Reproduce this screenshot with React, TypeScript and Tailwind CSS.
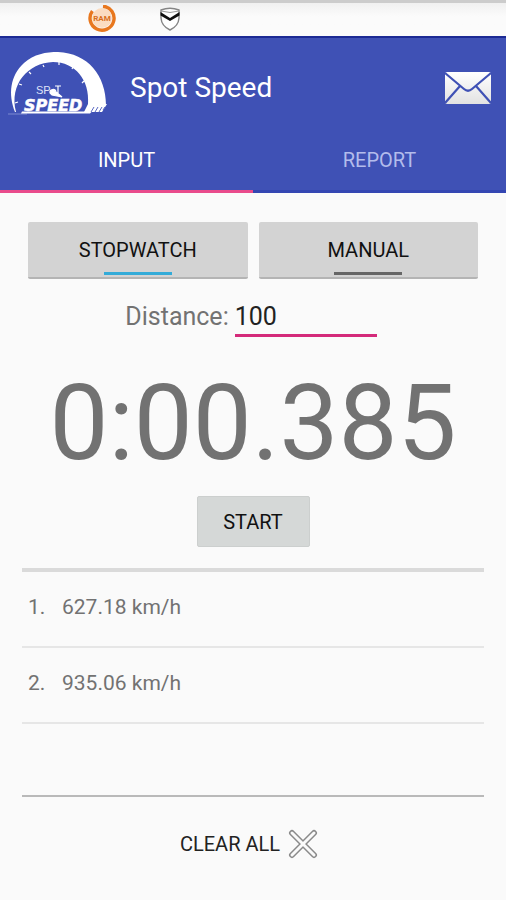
import React, { useState } from 'react';

const results = [627.18, 935.06];

function StatusBar() {
  return (
    <div className="flex h-9 items-center border-t-3 border-[#cccccc] bg-linear-to-b from-[#f0f0f0] to-[#fbfbfb] to-40% pl-[87px]">
      <svg width="30" height="30" viewBox="0 0 30 30" aria-hidden="true">
        <circle cx="15" cy="13" r="10" fill="#fbdcc0" />
        <path
          d="M16 1.2A12 12 0 1 1 5.4 6"
          fill="none"
          stroke="#e8771e"
          strokeWidth="3.4"
        />
        <text
          x="15"
          y="16"
          textAnchor="middle"
          fontSize="8"
          fontWeight="700"
          fontFamily="Roboto, sans-serif"
          fill="#d9701c"
        >
          RAM
        </text>
      </svg>
      <svg
        className="ml-[42px]"
        width="22"
        height="28"
        viewBox="0 0 22 28"
        aria-hidden="true"
      >
        <path
          d="M2 4Q11 .5 20 4V12Q19.500 20 11 24Q2.500 20 2 12Z"
          fill="#fff"
          stroke="#858585"
          strokeWidth="1.4"
        />
        <path d="M2 5Q11 8 20 5" fill="none" stroke="#999" />
        <path d="M1.500 6L11 12L20.500 6V9.500L11 15L1.500 9.500Z" fill="#111" />
      </svg>
    </div>
  );
}

function Logo() {
  return (
    <svg
      width="104"
      height="80"
      viewBox="8 48 104 80"
      role="img"
      aria-label="Spot Speed"
    >
      <path
        d="M15 112C8 94 10 76 24 63C34 54 46 52 58 52C88 53 106 76 106 105L88 104C90 80 75 62 53 62C28 63 9 84 16 112Z"
        fill="#fff"
      />
      <path
        d="M59 62V65M43 65L44 67M29 72L31 74M19 84L22 85M15 103L18 102M73 67L72 69M84 81L82 83"
        stroke="#fff"
        strokeWidth="1.2"
      />
      <path d="M8 114H27" stroke="#7d8ad0" strokeWidth="1" />
      <text
        x="36"
        y="94"
        fontSize="11"
        fontFamily="'Liberation Sans', sans-serif"
        fill="#dfe3f8"
      >
        SP
      </text>
      <path
        d="M50 93A3 3 0 0 1 56 92L62 97L52 95ZM55 86H61M58 86V94"
        fill="#fff"
        stroke="#fff"
        strokeWidth="1.2"
      />
      <path d="M88 104H107L102 112H84Z" fill="#fff" />
      <text
        x="24"
        y="111"
        fontSize="16"
        fontFamily="'DejaVu Sans', sans-serif"
        fontWeight="700"
        fontStyle="italic"
        fill="#fff"
        stroke="#fff"
        strokeWidth=".5"
      >
        SPEED
      </text>
      <path d="M22 111.500H92L90 113.500H21Z" fill="#fff" />
      <path
        d="M91 112L94 107M95 112L98 107M99 112L102 107M103 110L105 107"
        stroke="#5a69c2"
        strokeWidth="1"
      />
    </svg>
  );
}

function MailIcon() {
  return (
    <svg width="48" height="34" viewBox="0 0 48 34" aria-hidden="true">
      <defs>
        <linearGradient id="paper" x1="0" y1="0" x2="0" y2="1">
          <stop offset="0" stopColor="#fff" />
          <stop offset="1" stopColor="#e2e2e2" />
        </linearGradient>
      </defs>
      <rect x="1" y="1" width="46" height="32" rx="2" fill="url(#paper)" />
      <path
        d="M1 2L20 18Q24 21.500 28 18L47 2M1 32L16 15M47 32L32 15"
        fill="none"
        stroke="#3f51b5"
        strokeWidth="2.2"
      />
    </svg>
  );
}

interface ModeButtonProps {
  label: string;
  active: boolean;
  onClick: () => void;
}

function ModeButton({ label, active, onClick }: ModeButtonProps) {
  return (
    <button
      type="button"
      onClick={onClick}
      className="flex h-[57px] flex-1 flex-col items-center justify-end rounded-xs border-b-2 border-[#b4b4b4] bg-[#d3d3d3] pb-[2px] text-[20px] leading-6 text-[#111111]"
    >
      {label}
      <span
        className={
          active
            ? 'mt-[10px] h-[3px] w-[68px] bg-[#33abd8]'
            : 'mt-[10px] h-[3px] w-[68px] bg-[#666666]'
        }
      />
    </button>
  );
}

export default function App() {
  const [tab, setTab] = useState('INPUT');
  const [mode, setMode] = useState('STOPWATCH');
  const [distance, setDistance] = useState('100');

  return (
    <div className="min-h-screen bg-[#fafafa] font-[Roboto,sans-serif] text-[#727272]">
      <StatusBar />
      <header className="border-t-2 border-[#1c2a94] bg-[#3f51b5] text-white">
        <div className="flex h-[100px] items-center pr-[14px] pl-2">
          <Logo />
          <h1 className="ml-[18px] flex-1 text-[28px] leading-8">Spot Speed</h1>
          <button type="button" aria-label="Send mail">
            <MailIcon />
          </button>
        </div>
        <nav className="flex">
          {['INPUT', 'REPORT'].map((name) => (
            <button
              key={name}
              type="button"
              onClick={() => setTab(name)}
              className={
                tab === name
                  ? 'h-[55px] flex-1 border-b-3 border-[#e94b8c] pb-2 text-[20px] text-white'
                  : 'h-[55px] flex-1 border-b-3 border-[#3446b2] pb-2 text-[20px] text-[#b3bcec]'
              }
            >
              {name}
            </button>
          ))}
        </nav>
      </header>

      <main>
        <div className="flex gap-[11px] px-7 pt-[29px]">
          {['STOPWATCH', 'MANUAL'].map((name) => (
            <ModeButton
              key={name}
              label={name}
              active={mode === name}
              onClick={() => setMode(name)}
            />
          ))}
        </div>

        <div className="mt-5 flex justify-center gap-[6px] pr-1 text-[25px] leading-8">
          <label htmlFor="distance" className="pt-[2px]">
            Distance:
          </label>
          <input
            id="distance"
            type="text"
            value={distance}
            onChange={(e) => setDistance(e.target.value)}
            className="h-[38px] w-[142px] border-b-3 border-[#d42a7a] text-[#222222] outline-none"
          />
        </div>

        <div className="mt-[25px] text-center text-[105px] leading-[123px]">
          0:00.385
        </div>

        <div className="mt-[11px] flex justify-center">
          <button
            type="button"
            className="h-[51px] w-[113px] rounded-xs border border-[#cccfce] bg-[#d5d8d7] text-[20px] text-[#111111]"
          >
            START
          </button>
        </div>

        <ol className="mx-[22px] mt-[21px] h-[229px] border-t-4 border-b-2 border-t-[#dadada] border-b-[#b9b9b9] text-[21px]">
          {results.map((speed, index) => (
            <li
              key={speed}
              className="flex h-[76px] items-center border-b-2 border-[#e6e6e6] pb-[2px] pl-[6px]"
            >
              <span className="w-[34px]">{index + 1}.</span>
              <span>{speed} km/h</span>
            </li>
          ))}
        </ol>

        <div className="flex justify-center py-8 pr-2">
          <button
            type="button"
            className="flex items-center gap-2 text-[20px] text-[#222222]"
          >
            CLEAR ALL
            <svg width="30" height="30" viewBox="0 0 30 30" aria-hidden="true">
              <path
                d="M4 4L26 26M26 4L4 26"
                stroke="#8a8a8a"
                strokeWidth="6"
                strokeLinecap="round"
              />
              <path
                d="M4 4L26 26M26 4L4 26"
                stroke="#fafafa"
                strokeWidth="3"
                strokeLinecap="round"
              />
            </svg>
          </button>
        </div>
      </main>
    </div>
  );
}
